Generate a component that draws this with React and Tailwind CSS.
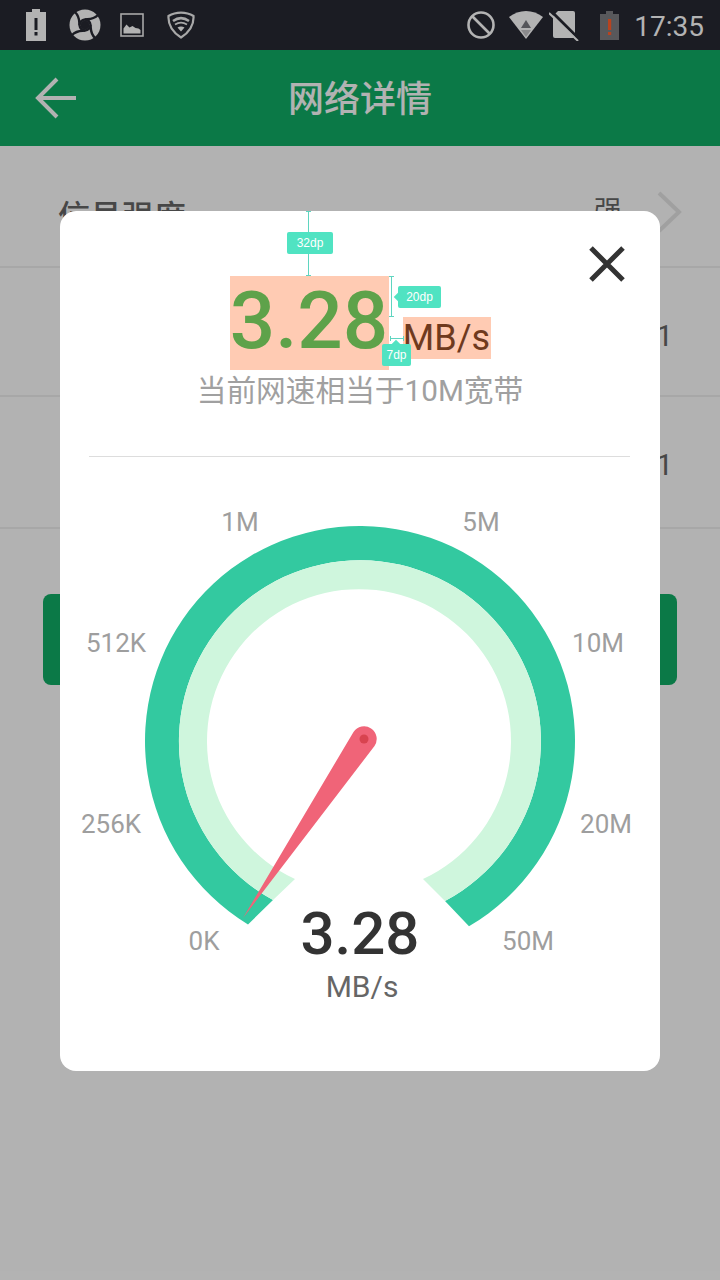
import React from 'react';

const ROWS = [
  { label: '信号强度', value: '强', h: 'h-[122px]', valueCls: 'pt-[46px] text-[28px]' },
  { value: '1', h: 'h-[129px]', valueCls: 'pt-[48px] pr-[47px] text-[30px]' },
  { value: '1', h: 'h-[132px]', valueCls: 'pt-[48px] pr-[47px] text-[30px]' },
];

const TICKS = [
  { t: '1M', x: 240, y: 522 },
  { t: '5M', x: 481, y: 522 },
  { t: '512K', x: 116, y: 643 },
  { t: '10M', x: 598, y: 643 },
  { t: '256K', x: 111, y: 824 },
  { t: '20M', x: 606, y: 824 },
  { t: '0K', x: 204, y: 941 },
  { t: '50M', x: 528, y: 941 },
];

function StatusIcons() {
  return (
    <div className="flex items-center">
      <svg width="20" height="32" viewBox="0 0 20 32" className="ml-[26px]">
        <path d="M6 0h8v3h6v29H0V3h6z" fill="#b3b3b3" />
        <rect x="8.500" y="9" width="3" height="12" fill="#1b1c23" />
        <rect x="8.500" y="23" width="3" height="3.500" fill="#1b1c23" />
      </svg>
      <svg width="32" height="32" viewBox="0 0 32 32" className="ml-[23px]">
        <circle cx="16" cy="16" r="15.500" fill="#b3b3b3" />
        {[0, 90, 180, 270].map(a => (
          <path key={a} transform={`rotate(${a} 16 16)`} d="M29 6C24 11 20 10 16 10.500S11 13 10.500 16" fill="none" stroke="#1b1c23" strokeWidth="2.400" />
        ))}
        <rect x="12" y="12" width="8" height="8" rx="2.500" fill="#1b1c23" />
      </svg>
      <svg width="24" height="24" viewBox="0 0 24 24" className="ml-[19px]">
        <rect x="1" y="1" width="22" height="22" fill="none" stroke="#a8a8a8" strokeWidth="1.600" />
        <path d="M3.500 20.500v-5l3-4 3 3 3-1.500 3 2 3 .5 2 1.500v3.500z" fill="#b3b3b3" />
      </svg>
      <svg width="28" height="28" viewBox="0 0 28 28" className="ml-[23px]">
        <path d="M1.500 5C9 .5 19 .5 26.500 5c.5 8-4 16-12.500 21.500C5.500 21 1 13 1.500 5z" fill="none" stroke="#a8a8a8" strokeWidth="2.200" />
        <path d="M6 10c5-3.500 11-3.500 16 0" fill="none" stroke="#a8a8a8" strokeWidth="2.600" />
        <path d="M8 13.500c4-2.500 8-2.500 12 0" fill="none" stroke="#a8a8a8" strokeWidth="1.800" />
        <path d="M10.500 16.500c2-1.200 5-1.200 7 0L14 20.500z" fill="#b3b3b3" />
      </svg>
    </div>
  );
}

function StatusRight() {
  return (
    <div className="flex items-center">
      <svg width="28" height="28" viewBox="0 0 28 28">
        <circle cx="14" cy="14" r="12.500" fill="none" stroke="#b3b3b3" strokeWidth="2.600" />
        <path d="M5 5l18 18" stroke="#b3b3b3" strokeWidth="2.600" />
      </svg>
      <svg width="34" height="28" viewBox="0 0 34 28" className="ml-[14px]">
        <path d="M0 6C10-2 24-2 34 6L17 28z" fill="#b3b3b3" />
        <path d="M17 9l5 8H12z" fill="#55565a" />
        <path d="M12 19h10l-5 7z" fill="#8a8a8c" />
      </svg>
      <svg width="30" height="32" viewBox="0 0 30 32" className="ml-[6px]">
        <path d="M9 2h15a2 2 0 0 1 2 2v23a2 2 0 0 1-2 2H6a2 2 0 0 1-2-2V7z" fill="#b3b3b3" />
        <path d="M2 2l26 26" stroke="#1b1c23" strokeWidth="3" />
        <path d="M0 4l29 28" stroke="#b3b3b3" strokeWidth="2" />
      </svg>
      <svg width="19" height="29" viewBox="0 0 19 29" className="ml-[21px]">
        <path d="M6 0h7v3h6v26H0V3h6z" fill="#58585b" />
        <rect x="8" y="8" width="3.200" height="11" fill="#b8431f" />
        <rect x="8" y="21" width="3.200" height="3" fill="#b8431f" />
      </svg>
      <span className="ml-[15px] mr-[16px] mt-[3px] text-[28px] leading-none text-[#b3b3b3] font-['Roboto',sans-serif]">17:35</span>
    </div>
  );
}

function Gauge() {
  return (
    <div className="relative h-[568px] pt-[442px] flex flex-col items-center font-['Roboto',sans-serif]">
      <svg width="600" height="568" viewBox="60 457 600 568" className="absolute inset-0">
        <path d="M248 924.500A215 215 0 1 1 469 926.300L445 901A181 181 0 1 0 273 900Z" fill="#33c9a0" />
        <path d="M273 900A181 181 0 1 1 445 901L423 879A152 152 0 1 0 295 879Z" fill="#cff6dd" />
        <path d="M243 918L353.500 732A12.620 12.620 0 1 1 374.500 746Z" fill="#f06478" />
        <circle cx="364" cy="739" r="4.500" fill="#d8434f" />
        {TICKS.map(k => (
          <text key={k.t} x={k.x} y={k.y + 9} textAnchor="middle" fontSize="26" fill="#9e9e9e">{k.t}</text>
        ))}
      </svg>
      <div className="relative text-[60px] leading-[70px] font-medium text-[#333333]">3.28</div>
      <div className="relative ml-[4px] text-[30px] leading-[36px] text-[#666666]">MB/s</div>
    </div>
  );
}

function Annotations() {
  return (
    <div className="text-white text-[12px] font-['Liberation_Sans',sans-serif]">
      <div className="absolute left-[227px] top-0 w-[46px] h-[65px] flex items-center justify-center">
        <div className="absolute inset-y-0 left-[19px] w-[5px] border-y border-[#5fd5c0] flex justify-center">
          <div className="w-px bg-[#5fd5c0]" />
        </div>
        <div className="relative w-full h-[22px] mb-[1px] rounded-[2px] bg-[#50e3c2] flex items-center justify-center">32dp</div>
      </div>

      <div className="absolute left-[329px] top-[65px] h-[41px] flex items-start gap-[4px]">
        <div className="w-[5px] h-full border-y border-[#5fd5c0] flex justify-center">
          <div className="w-px bg-[#5fd5c0]" />
        </div>
        <div className="relative mt-[10px] w-[43px] h-[22px] rounded-[2px] bg-[#50e3c2] flex items-center justify-center">
          <span className="absolute -left-[3px] top-[8px] w-[6px] h-[6px] rotate-45 bg-[#50e3c2]" />
          <span className="relative">20dp</span>
        </div>
      </div>

      <div className="absolute left-[322px] top-[125px] w-[29px] flex flex-col items-center gap-[3px]">
        <div className="w-[14px] h-[5px] border-x border-[#5fd5c0] flex items-center">
          <div className="w-full h-px bg-[#5fd5c0]" />
        </div>
        <div className="relative w-full h-[22px] rounded-[2px] bg-[#50e3c2] flex items-center justify-center">
          <span className="absolute left-[11px] -top-[3px] w-[6px] h-[6px] rotate-45 bg-[#50e3c2]" />
          <span className="relative">7dp</span>
        </div>
      </div>
    </div>
  );
}

export default function App() {
  return (
    <div className="relative w-[720px] h-[1280px] overflow-hidden bg-white font-['Roboto','Noto_Sans_CJK_SC',sans-serif]">
      <div className="relative z-20 h-[50px] bg-[#1b1c23] flex items-center justify-between">
        <StatusIcons />
        <StatusRight />
      </div>

      <div className="h-[96px] bg-[#10ae66] flex items-center relative">
        <svg width="42" height="42" viewBox="0 0 42 42" className="ml-[35px] mt-[-1px]" fill="none" stroke="#ffffff" strokeWidth="4">
          <path d="M41 21H3M22 2L3 21l19 19" />
        </svg>
        <div className="absolute inset-0 pt-[4px] flex items-center justify-center text-[36px] font-medium text-white">网络详情</div>
      </div>

      {ROWS.map((r, i) => (
        <div key={i} className={`${r.h} pl-[58px] flex items-start border-b-2 border-[#f0f0f0] text-[#666666]`}>
          {r.label && <div className="pt-[51px] text-[32px] leading-[40px] font-medium">{r.label}</div>}
          <div className={`ml-auto leading-[40px] ${r.valueCls}`}>{r.value}</div>
          {r.label && (
            <svg width="26" height="42" viewBox="0 0 26 42" className="mt-[45px] ml-[35px] mr-[37px]" fill="none" stroke="#e6e6e6" strokeWidth="4">
              <path d="M2 2l20 19L2 40" />
            </svg>
          )}
        </div>
      ))}

      <div className="mx-[43px] mt-[65px] h-[91px] rounded-[8px] bg-[#10ae66]" />

      <div className="absolute inset-0 z-10 bg-black/30" />

      <div className="absolute z-10 left-[60px] top-[211px] w-[600px] h-[860px] rounded-[16px] bg-white pt-[65px]">
        <div className="flex justify-center items-start gap-[14px] font-['Roboto',sans-serif]">
          <div className="w-[159px] h-[94px] bg-[#ffcbb3] text-[80px] leading-[90px] font-medium text-[#5ea24a] text-center">3.28</div>
          <div className="mt-[41px] w-[88px] h-[42px] bg-[#ffcbb3] text-[36px] leading-[42px] text-[#6f3a1e] text-center">MB/s</div>
        </div>
        <div className="mt-[2px] text-center text-[29.7px] leading-[38px] text-[#a0a0a0]">当前网速相当于10M宽带</div>
        <div className="mt-[46px] ml-[29px] mr-[30px] h-px bg-[#dddddd]" />
        <Gauge />
        <Annotations />
        <svg width="38" height="38" viewBox="0 0 38 38" className="absolute right-[34px] top-[34px]" stroke="#333333" strokeWidth="5">
          <path d="M3 3l32 32M35 3L3 35" />
        </svg>
      </div>
    </div>
  );
}
